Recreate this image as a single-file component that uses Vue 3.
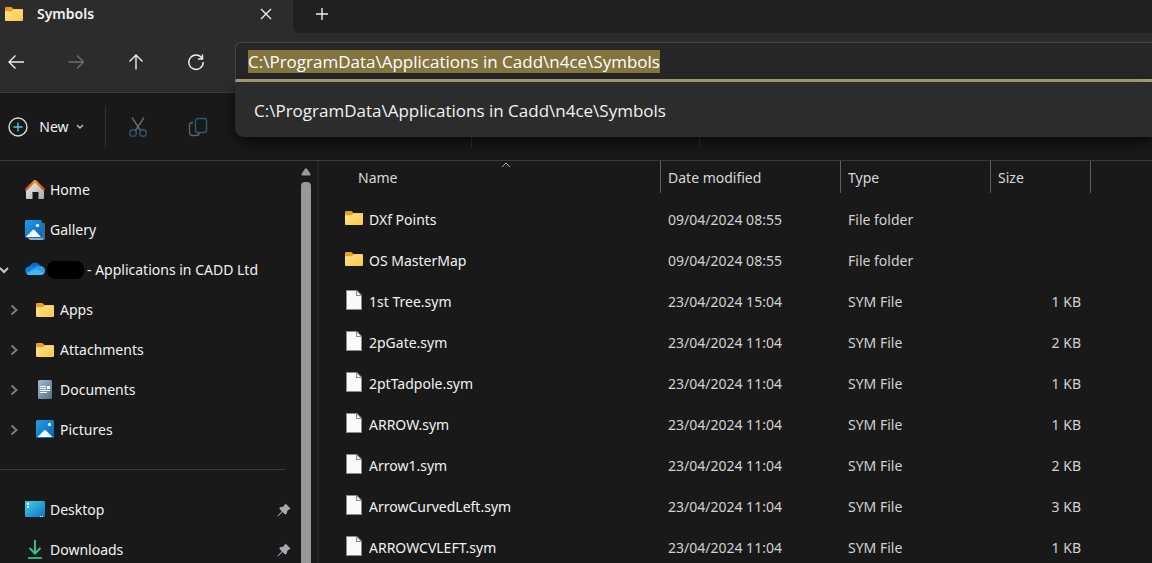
<script setup>
import { ref, onMounted } from 'vue'

const path = ref('C:\\ProgramData\\Applications in Cadd\\n4ce\\Symbols')
const address = ref(null)

const places = [
  { name: 'Home', icon: 'home' },
  { name: 'Gallery', icon: 'gallery' },
  { name: '- Applications in CADD Ltd', icon: 'cloud', open: true, masked: true },
  { name: 'Apps', icon: 'folder', child: true },
  { name: 'Attachments', icon: 'folder', child: true },
  { name: 'Documents', icon: 'documents', child: true },
  { name: 'Pictures', icon: 'pictures', child: true },
]

const pinned = [
  { name: 'Desktop', icon: 'desktop' },
  { name: 'Downloads', icon: 'downloads' },
]

const files = [
  { name: 'DXf Points', date: '09/04/2024 08:55', type: 'File folder', size: '' },
  { name: 'OS MasterMap', date: '09/04/2024 08:55', type: 'File folder', size: '' },
  { name: '1st Tree.sym', date: '23/04/2024 15:04', type: 'SYM File', size: '1 KB' },
  { name: '2pGate.sym', date: '23/04/2024 11:04', type: 'SYM File', size: '2 KB' },
  { name: '2ptTadpole.sym', date: '23/04/2024 11:04', type: 'SYM File', size: '1 KB' },
  { name: 'ARROW.sym', date: '23/04/2024 11:04', type: 'SYM File', size: '1 KB' },
  { name: 'Arrow1.sym', date: '23/04/2024 11:04', type: 'SYM File', size: '2 KB' },
  { name: 'ArrowCurvedLeft.sym', date: '23/04/2024 11:04', type: 'SYM File', size: '3 KB' },
  { name: 'ARROWCVLEFT.sym', date: '23/04/2024 11:04', type: 'SYM File', size: '1 KB' },
]

onMounted(() => {
  address.value.focus()
  address.value.select()
})
</script>

<template>
  <div class="window">
    <svg class="defs" width="0" height="0" aria-hidden="true">
      <defs>
        <linearGradient id="gFolder" x1="0" y1="0" x2="1" y2="1">
          <stop offset="0" stop-color="#ffe596" /><stop offset="1" stop-color="#fdc742" />
        </linearGradient>
        <linearGradient id="gBlue" x1="0" y1="0" x2="1" y2="1">
          <stop offset="0" stop-color="#1f9fe6" /><stop offset="1" stop-color="#0a63b8" />
        </linearGradient>
        <linearGradient id="gHouse" x1="0" y1="0" x2="1" y2="1">
          <stop offset="0" stop-color="#efefef" /><stop offset="1" stop-color="#a9a9a9" />
        </linearGradient>
        <linearGradient id="gRoof" x1="0" y1="0" x2="0" y2="1">
          <stop offset="0" stop-color="#f5992a" /><stop offset="1" stop-color="#cf4d12" />
        </linearGradient>
        <linearGradient id="gDoc" x1="0" y1="0" x2="1" y2="1">
          <stop offset="0" stop-color="#a9bbd0" /><stop offset="1" stop-color="#526d8d" />
        </linearGradient>
        <linearGradient id="gDesk" x1="0" y1="0" x2="1" y2="1">
          <stop offset="0" stop-color="#45d3e4" /><stop offset="1" stop-color="#0c70c4" />
        </linearGradient>
      </defs>
      <symbol id="folder" viewBox="0 0 20 20">
        <path d="M1 4.200Q1 3 2.200 3H7q.6 0 1 .5L9.500 5H18q1 0 1 1v4H1z" fill="#e9a21c" />
        <path d="M1 7.200h6.300q.5 0 .9-.4L9.600 5.600q.3-.3.8-.3H18q1 0 1 1V16q0 1-1 1H2q-1 0-1-1z" fill="url(#gFolder)" />
      </symbol>
      <symbol id="file" viewBox="0 0 20 20">
        <path d="M2 0h11l5 5v15H2z" fill="#8a8a8a" />
        <path d="M3 1h9v5h5v13H3z" fill="#fafafa" />
        <path d="M13 1.500V5h3.500z" fill="#f4f4f4" />
      </symbol>
      <symbol id="home" viewBox="0 0 20 20">
        <path d="M1 9.500 10 2l9 7.500V18q0 1-1 1h-4.500v-7h-6v7H2q-1 0-1-1z" fill="url(#gHouse)" />
        <path d="M1.200 9.400 10 .9l8.800 8.500" fill="none" stroke="url(#gRoof)" stroke-width="2.400" stroke-linecap="round" stroke-linejoin="round" />
      </symbol>
      <symbol id="gallery" viewBox="0 0 20 20">
        <path d="M5 3h14q1 0 1 1v15q0 1-1 1H5l-2-2z" fill="#3a6a99" />
        <path d="M3 18h14l1-1v2q0 1-1 1H5z" fill="#8aaed0" />
        <rect width="17" height="18" rx="1.500" fill="url(#gBlue)" />
        <path d="M1 17 7.500 10q1-1.100 2 0l6.500 7z" fill="#f4fafe" />
        <circle cx="12.500" cy="5.500" r="1.700" fill="#e4f7ff" />
      </symbol>
      <symbol id="pictures" viewBox="0 0 20 20">
        <rect x="1" y="0" width="18" height="18" rx="1.500" fill="url(#gBlue)" />
        <path d="M2.500 17 9 10.500q1-1.100 2 0l6.500 6.500z" fill="#f4fafe" />
        <circle cx="14.500" cy="4.500" r="1.700" fill="#d7f3ff" />
      </symbol>
      <symbol id="cloud" viewBox="0 0 20 20">
        <g transform="translate(0 -1.500)">
          <path d="M4.500 8A6 6 0 0 1 15.500 7.500L14 13 6 16.500 1 14.500A4 4 0 0 1 4.500 8z" fill="#0b6fcb" />
          <path d="M4.500 8q2.500-.7 4.800.7L15 12.500l-9 4H4.500A4.300 4.300 0 0 1 4.500 8z" fill="#1283dc" />
          <path d="M9 9.500Q11 7 15.500 7.500q4.500.7 4.500 4.700 0 4-4 4.300H4.500q-1.800-.1-3-1.600z" fill="#2f9eea" />
          <path d="M1.500 14.900 11.500 10.600 19 14.700q-1 1.700-3 1.800H4.500q-1.800-.1-3-1.600z" fill="#45b5f4" />
        </g>
      </symbol>
      <symbol id="documents" viewBox="0 0 20 20">
        <rect x="3" width="14" height="19" rx="1.500" fill="url(#gDoc)" />
        <path d="M5 6.500h6M5 8.500h6M5 10.500h10M5 12.500h7" stroke="#fff" stroke-width="1" />
        <rect x="12" y="6" width="3" height="3" fill="#fff" />
      </symbol>
      <symbol id="desktop" viewBox="0 0 20 20">
        <rect y="1" width="20" height="16" rx="1.200" fill="url(#gDesk)" />
        <path d="M2 3h2v2H2zM2 6h2v2H2zM15 16h1v1h-1zM17 16h1v1h-1z" fill="#e9fbff" />
      </symbol>
      <symbol id="downloads" viewBox="0 0 20 20">
        <path d="M10 0v13M4.500 8l5.500 5.500L15.500 8" fill="none" stroke="#2fc08c" stroke-width="2" />
        <path d="M3 18h14" stroke="#20ae8c" stroke-width="2" />
      </symbol>
    </svg>

    <header class="tabs">
      <div class="tab">
        <svg class="icon"><use href="#folder" /></svg>
        <span class="tab-title">Symbols</span>
        <button class="close" aria-label="Close tab">
          <svg width="12" height="12" viewBox="0 0 12 12"><path d="M1 1l10 10M11 1 1 11" /></svg>
        </button>
      </div>
      <div class="strip">
        <button aria-label="New tab">
          <svg width="12" height="12" viewBox="0 0 12 12"><path d="M6 0v12M0 6h12" /></svg>
        </button>
      </div>
    </header>

    <div class="nav">
      <div class="nav-buttons">
        <button aria-label="Back"><svg width="18" height="18" viewBox="0 0 18 18"><path d="M17 9H2M8.500 2.500 2 9l6.500 6.500" /></svg></button>
        <button aria-label="Forward" disabled><svg width="18" height="18" viewBox="0 0 18 18"><path d="M1.500 9H16.500M10 2.500 16.500 9 10 15.500" /></svg></button>
        <button aria-label="Up"><svg width="18" height="18" viewBox="0 0 18 18"><path d="M9 16.500V2M2.500 8.500 9 2l6.500 6.500" /></svg></button>
        <button aria-label="Refresh"><svg width="18" height="18" viewBox="0 0 18 18"><path d="M15 5.200A7.200 7.200 0 1 0 16.200 9M15.500 1.500V6H11" /></svg></button>
      </div>
      <div class="address">
        <input ref="address" v-model="path" type="text" aria-label="Address" spellcheck="false" />
        <div class="suggestions">
          <button>{{ path }}</button>
        </div>
      </div>
    </div>

    <div class="toolbar">
      <button class="new">
        <svg width="20" height="20" viewBox="0 0 20 20">
          <circle cx="10" cy="10" r="9" stroke="#d8d8d8" />
          <path d="M10 5.500v9M5.500 10h9" stroke="#4cc2f1" />
        </svg>
        New
        <svg width="8" height="6" viewBox="0 0 8 6"><path d="M1 1l3 3 3-3" stroke="#c4c4c4" /></svg>
      </button>
      <div class="group first">
        <button aria-label="Cut" disabled>
          <svg width="20" height="22" viewBox="0 0 20 22">
            <path d="M4 1.500l8.500 13M16 1.500l-8.500 13" stroke="#6b6b6b" />
            <circle cx="5" cy="17" r="3.300" stroke="#31586e" /><circle cx="15" cy="17" r="3.300" stroke="#31586e" />
          </svg>
        </button>
        <button aria-label="Copy" disabled>
          <svg width="20" height="20" viewBox="0 0 20 20">
            <path d="M5 5.500q-3.500 0-3.500 3V15q0 3.500 3.500 3.500h3q3 0 3.500-2.500" stroke="#626262" />
            <rect x="7.500" y="1.500" width="11" height="14" rx="2.500" stroke="#31586e" />
          </svg>
        </button>
      </div>
      <div class="group second"></div>
      <div class="group rest"></div>
    </div>

    <div class="body">
      <nav class="sidebar">
        <ul>
          <li v-for="p in places" :key="p.name">
            <a href="#" :class="{ child: p.child, open: p.open }">
              <svg v-if="p.open" class="chevron" width="10" height="10" viewBox="0 0 10 10"><path d="M1 3l4 4 4-4" stroke="#c8c8c8" /></svg>
              <svg v-else-if="p.child" class="chevron" width="10" height="12" viewBox="0 0 10 12"><path d="M2.500 1.500 7.500 6l-5 4.500" stroke="#7c7c7c" /></svg>
              <svg class="icon"><use :href="'#' + p.icon" /></svg>
              <span v-if="p.masked" class="mask"></span>
              <span>{{ p.name }}</span>
            </a>
          </li>
        </ul>
        <hr />
        <ul>
          <li v-for="p in pinned" :key="p.name">
            <a href="#">
              <svg class="icon"><use :href="'#' + p.icon" /></svg>
              <span>{{ p.name }}</span>
              <svg class="pin" width="14" height="14" viewBox="0 0 14 14"><path d="M8.500 0.500 13.500 5.500 12 6.500 10.500 7.500 9.500 11 8 11.500 5.500 9 1.200 13.200 0.500 12.800 4.800 8.300 2.300 5.800 3 4.300 6.500 3.500z" fill="#a3aab1" /></svg>
            </a>
          </li>
        </ul>
      </nav>
      <div class="scrollbar">
        <svg width="10" height="8" viewBox="0 0 10 8"><path d="M4 .7q1-1 2 0L9.500 6q.4 1.500-1 1.500h-7Q.1 7.500.5 6z" fill="#9a9a9a" /></svg>
        <div class="thumb"></div>
      </div>
      <main>
        <table>
          <colgroup><col /><col class="c-date" /><col class="c-type" /><col class="c-size" /></colgroup>
          <thead>
            <tr>
              <th scope="col" aria-sort="ascending">
                <div class="head name">
                  Name
                  <svg class="sort" width="10" height="6" viewBox="0 0 10 6"><path d="M1 5l4-4 4 4" stroke="#b0b0b0" /></svg>
                </div>
              </th>
              <th scope="col"><div class="head">Date modified</div></th>
              <th scope="col"><div class="head">Type</div></th>
              <th scope="col"><div class="head">Size</div></th>
            </tr>
          </thead>
          <tbody>
            <tr v-for="f in files" :key="f.name">
              <td class="name-cell">
                <div class="entry">
                  <svg class="icon"><use :href="f.size ? '#file' : '#folder'" /></svg>
                  <span>{{ f.name }}</span>
                </div>
              </td>
              <td>{{ f.date }}</td>
              <td>{{ f.type }}</td>
              <td class="size">{{ f.size }}</td>
            </tr>
          </tbody>
        </table>
      </main>
    </div>
  </div>
</template>

<style>
body {
  background: #191919;
}
</style>

<style scoped>
.window {
  display: flex;
  flex-direction: column;
  height: 100vh;
  overflow: hidden;
  background: #191919;
  color: #f2f2f2;
  font: 14px/20px "Noto Sans", "Open Sans", sans-serif;
}
.window *,
.window *::before {
  box-sizing: border-box;
}
.defs {
  position: absolute;
}
svg {
  flex: none;
  fill: none;
  stroke-width: 1.4;
}
button {
  display: flex;
  align-items: center;
  justify-content: center;
  padding: 0;
  border: 0;
  background: none;
  color: inherit;
  font: inherit;
}
.icon {
  width: 20px;
  height: 20px;
}

.tabs {
  display: flex;
  flex: none;
  height: 33px;
  background: #2c2c2c;
}
.tab {
  display: flex;
  align-items: center;
  width: 293px;
  padding: 0 21px 6px 4px;
}
.tab-title {
  flex: 1;
  margin-left: 13px;
  font-weight: 600;
}
.close svg,
.strip svg,
.nav-buttons svg {
  stroke: #eee;
}
.strip {
  display: flex;
  flex: 1;
  padding: 0 23px 5px;
  border-bottom-left-radius: 6px;
  background: #202020;
}

.nav {
  display: flex;
  flex: none;
  height: 60px;
  border-bottom: 1px solid #3d3d3d;
  background: #2c2c2c;
}
.nav-buttons {
  display: flex;
  gap: 42px;
  width: 235px;
  padding: 0 0 2px 7px;
}
.nav-buttons button {
  width: 18px;
}
.nav-buttons button:disabled svg {
  stroke: #6e6e6e;
}
.address {
  position: relative;
  z-index: 1;
  flex: 1;
  padding-top: 9px;
}
.address input {
  display: block;
  width: 100%;
  height: 40px;
  padding: 0 12px;
  border: 1px solid #454545;
  border-right: 0;
  border-bottom: 3px solid #aca17a;
  border-radius: 6px 0 0 0;
  outline: 0;
  background: #262626;
  color: #fff;
  caret-color: transparent;
  font: 17px/24px "Open Sans", "Noto Sans", sans-serif;
}
.address input::selection {
  background: #84753e;
  color: #fff;
}
.suggestions {
  position: absolute;
  top: 49px;
  right: 0;
  left: 0;
  border-radius: 0 0 0 9px;
  background: #2c2c2c;
  box-shadow: 0 6px 14px #0009;
}
.suggestions button {
  justify-content: flex-start;
  width: 100%;
  height: 55px;
  padding: 3px 19px 0;
  font: 17px/24px "Open Sans", "Noto Sans", sans-serif;
}

.toolbar {
  display: flex;
  flex: none;
  align-items: center;
  height: 68px;
  border-bottom: 1px solid #3b3b3b;
}
.new {
  gap: 7px;
  width: 105px;
  padding: 0 21px 0 8px;
}
.new svg:first-child {
  margin-right: 4px;
}
.group {
  display: flex;
  align-items: center;
  height: 40px;
  border-left: 1px solid #333;
}
.first {
  gap: 40px;
  width: 366px;
  padding-left: 22px;
}
.second {
  width: 228px;
}
.rest {
  flex: 1;
}

.body {
  display: flex;
  flex: 1;
  min-height: 0;
}
.sidebar {
  width: 300px;
  padding-top: 8px;
}
.sidebar ul {
  margin: 0;
  padding: 0;
  list-style: none;
}
.sidebar a {
  display: flex;
  position: relative;
  align-items: center;
  gap: 5px;
  height: 40px;
  padding: 1px 9px 0 25px;
  color: inherit;
  text-decoration: none;
  white-space: nowrap;
}
.sidebar a.child {
  padding-left: 35px;
}
.chevron {
  position: absolute;
  left: 9px;
  stroke-width: 2;
}
.open .chevron {
  left: -1px;
}
.mask {
  width: 37px;
  height: 18px;
  margin-left: -3px;
  margin-right: -2px;
  border-radius: 8px;
  background: #000;
}
.pin {
  margin-left: auto;
}
.sidebar hr {
  height: 1px;
  margin: 20px 15px 19px 0;
  border: 0;
  background: #3a3a3a;
}
.scrollbar {
  display: flex;
  flex-direction: column;
  align-items: center;
  gap: 6px;
  width: 12px;
  padding-top: 7px;
}
.thumb {
  flex: 1;
  width: 10px;
  border-radius: 4px 4px 0 0;
  background: #989898;
}

main {
  flex: 1;
  min-width: 0;
  margin-left: 5px;
  padding: 0 61px 0 27px;
  border-left: 2px solid #262626;
}
table {
  width: 100%;
  border-collapse: collapse;
  table-layout: fixed;
}
.c-date {
  width: 180px;
}
.c-type {
  width: 150px;
}
.c-size {
  width: 100px;
}
th {
  height: 38px;
  padding: 0;
  font-weight: 400;
  text-align: left;
  vertical-align: top;
}
.head {
  position: relative;
  height: 32px;
  padding: 7px 7px 0;
  border-right: 1px solid #5f5f5f;
  color: #d8d8d8;
}
.head.name {
  margin-left: 5px;
}
.sort {
  position: absolute;
  top: 1px;
  left: calc(50% - 5px);
  stroke-width: 1;
}
td {
  height: 41px;
  padding: 0 7px;
  color: #d2d2d2;
  white-space: nowrap;
}
td.name-cell {
  padding: 0;
  color: #f2f2f2;
}
.entry {
  display: flex;
  align-items: center;
  gap: 5px;
}
.entry .icon {
  margin-top: -3px;
  margin-left: -2px;
}
td.size {
  padding-right: 10px;
  text-align: right;
}
</style>
